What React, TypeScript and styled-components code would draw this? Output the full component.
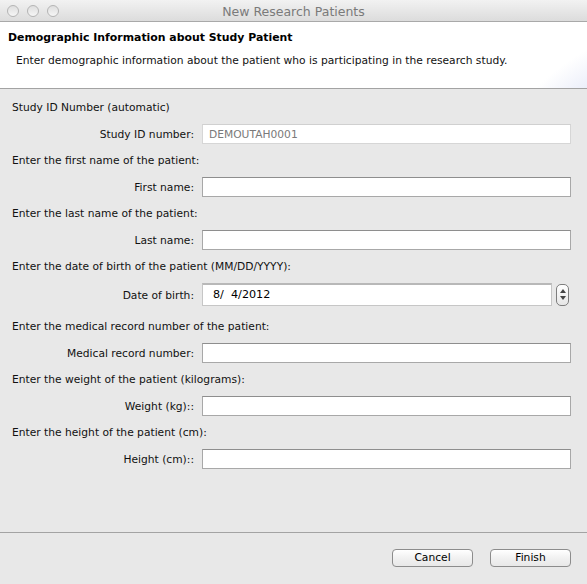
import React from "react";
import styled, { createGlobalStyle } from "styled-components";

const GlobalStyle = createGlobalStyle`
  html, body { margin: 0; padding: 0; background: #e8e8e8; }
  body { font-family: "DejaVu Sans", "Liberation Sans", sans-serif; font-size: 10.7px; color: #111; }
  * { box-sizing: border-box; }
`;

const Window = styled.div`
  width: 587px;
  height: 584px;
  display: flex;
  flex-direction: column;
  background: #e8e8e8;
  overflow: hidden;
`;

const TitleBar = styled.div`
  height: 22px;
  flex: none;
  position: relative;
  display: flex;
  align-items: center;
  justify-content: center;
  background: linear-gradient(#f2f2f2, #dcdcdc);
  border-bottom: 1px solid #a9a9a9;
`;

const Lights = styled.div`
  position: absolute;
  left: 7px;
  top: 5px;
  display: flex;
  gap: 8px;
`;

const Light = styled.span`
  width: 12px;
  height: 12px;
  border-radius: 50%;
  border: 1px solid #b4b4b4;
  background: linear-gradient(#dedede, #f6f6f6);
`;

const WindowTitle = styled.div`
  font-size: 12.5px;
  color: #7a7a7a;
  margin-top: 1px;
`;

const Header = styled.div`
  height: 67px;
  flex: none;
  background:
    radial-gradient(circle at 720px 200px, #e0e6f7 0 175px, transparent 176px),
    radial-gradient(circle at 700px 230px, #eceffa 0 200px, #ffffff 232px);
  border-bottom: 1px solid #a3a3a3;
  padding: 9px 0 0 8px;
`;

const HeaderTitle = styled.div`
  font-weight: bold;
  font-size: 10.9px;
  line-height: 14px;
  color: #000;
`;

const HeaderText = styled.div`
  margin-top: 9px;
  padding-left: 8px;
  line-height: 14px;
  color: #111;
`;

const Body = styled.div`
  flex: 1;
  padding: 10px 16px 0 12px;
  display: flex;
  flex-direction: column;
`;

const Section = styled.div<{ $after?: number }>`
  display: flex;
  flex-direction: column;
  gap: 8px;
  margin-bottom: ${(p) => p.$after ?? 8}px;
`;

const Instruction = styled.div`
  line-height: 16px;
  height: 16px;
  margin-top: 1px;
`;

const FieldRow = styled.div`
  display: grid;
  grid-template-columns: 182px 1fr;
  column-gap: 8px;
  align-items: center;
`;

const Label = styled.div`
  text-align: right;
  white-space: nowrap;
  padding-top: 1px;
`;

const Input = styled.div<{ $disabled?: boolean }>`
  height: 20px;
  background: #fff;
  border: 1px solid ${(p) => (p.$disabled ? "#d6d6d6" : "#a8a8a8")};
  border-top-color: ${(p) => (p.$disabled ? "#d0d0d0" : "#8e8e8e")};
  padding: 0 6px;
  line-height: 19px;
  color: ${(p) => (p.$disabled ? "#7a7a7a" : "#000")};
`;

const DateWrap = styled.div`
  display: flex;
  align-items: center;
  gap: 4px;
`;

const DateInput = styled.div`
  flex: 1;
  height: 23px;
  background: #fff;
  border: 1px solid #c6c6c6;
  border-top: 2px solid #b8b8b8;
  padding: 0 10px;
  line-height: 20px;
  font-size: 11.2px;
  color: #000;
`;

const Stepper = styled.div`
  width: 13px;
  height: 22px;
  margin-right: 2px;
  border: 1px solid #7e7e7e;
  border-radius: 5px;
  background: linear-gradient(#ffffff, #e6e6e6);
  display: flex;
  flex-direction: column;
  align-items: center;
  justify-content: center;
  gap: 3px;
`;

const Arrow = styled.span<{ $down?: boolean }>`
  width: 0;
  height: 0;
  border-left: 3px solid transparent;
  border-right: 3px solid transparent;
  ${(p) => (p.$down ? "border-top: 4px solid #444;" : "border-bottom: 4px solid #444;")}
`;

const Footer = styled.div`
  flex: none;
  height: 52px;
  border-top: 1px solid #a3a3a3;
  display: flex;
  justify-content: flex-end;
  align-items: flex-start;
  gap: 17px;
  padding: 16px 16px 0 0;
`;

const Button = styled.button`
  width: 81px;
  height: 18px;
  border: 1px solid #8c8c8c;
  border-radius: 4px;
  background: linear-gradient(#ffffff, #f1f1f1 50%, #e8e8e8);
  font-family: "DejaVu Sans", "Liberation Sans", sans-serif;
  font-size: 10.7px;
  color: #000;
  padding: 0;
  line-height: 16px;
`;

const Field: React.FC<{ label: string; value?: string; disabled?: boolean }> = ({ label, value, disabled }) => (
  <FieldRow>
    <Label>{label}</Label>
    <Input $disabled={disabled}>{value}</Input>
  </FieldRow>
);

export default function App() {
  return (
    <>
      <GlobalStyle />
      <Window>
        <TitleBar>
          <Lights>
            <Light />
            <Light />
            <Light />
          </Lights>
          <WindowTitle>New Research Patients</WindowTitle>
        </TitleBar>
        <Header>
          <HeaderTitle>Demographic Information about Study Patient</HeaderTitle>
          <HeaderText>Enter demographic information about the patient who is participating in the research study.</HeaderText>
        </Header>
        <Body>
          <Section>
            <Instruction>Study ID Number (automatic)</Instruction>
            <Field label="Study ID number:" value="DEMOUTAH0001" disabled />
          </Section>
          <Section>
            <Instruction>Enter the first name of the patient:</Instruction>
            <Field label="First name:" />
          </Section>
          <Section>
            <Instruction>Enter the last name of the patient:</Instruction>
            <Field label="Last name:" />
          </Section>
          <Section $after={12}>
            <Instruction>Enter the date of birth of the patient (MM/DD/YYYY):</Instruction>
            <FieldRow>
              <Label>Date of birth:</Label>
              <DateWrap>
                <DateInput>8/&nbsp; 4/2012</DateInput>
                <Stepper>
                  <Arrow />
                  <Arrow $down />
                </Stepper>
              </DateWrap>
            </FieldRow>
          </Section>
          <Section>
            <Instruction>Enter the medical record number of the patient:</Instruction>
            <Field label="Medical record number:" />
          </Section>
          <Section>
            <Instruction>Enter the weight of the patient (kilograms):</Instruction>
            <Field label="Weight (kg)::" />
          </Section>
          <Section>
            <Instruction>Enter the height of the patient (cm):</Instruction>
            <Field label="Height (cm)::" />
          </Section>
        </Body>
        <Footer>
          <Button>Cancel</Button>
          <Button>Finish</Button>
        </Footer>
      </Window>
    </>
  );
}
